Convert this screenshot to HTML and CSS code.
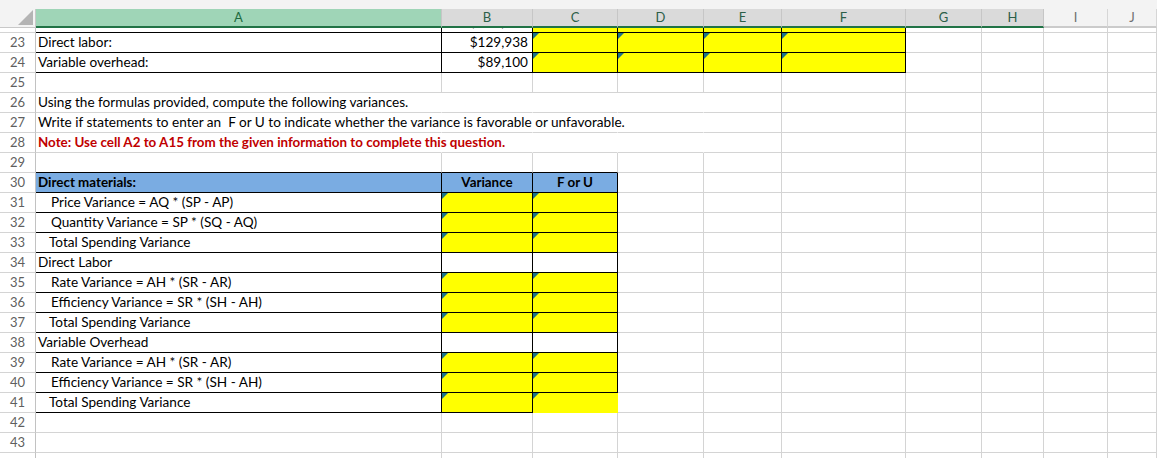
FILE: index.html
```html
<!DOCTYPE html>
<html>
<head>
<meta charset="utf-8">
<link rel="stylesheet" href="styles.css">
</head>
<body>
<div class="sheet">
  <div class="colhead">
    <div class="corner"><svg width="35" height="18" viewBox="0 0 35 18"><polygon points="33,1 33,16 18,16" fill="#b4b4b4"/></svg></div>
    <div class="ch sel">A</div>
    <div class="ch">B</div>
    <div class="ch">C</div>
    <div class="ch">D</div>
    <div class="ch">E</div>
    <div class="ch">F</div>
    <div class="ch">G</div>
    <div class="ch">H</div>
    <div class="ch off">I</div>
    <div class="ch off">J</div>
  </div>
  <div class="viewport">
    <div class="grid">
      <div class="r"><div class="h"></div><div class="bb br"></div><div class="bb br num">$146,360</div><div class="y bb br"></div><div class="y bb br"></div><div class="y bb br"></div><div class="y bb br"></div><div></div><div></div><div></div><div></div></div>
      <div class="r"><div class="h">23</div><div class="bb br">Direct labor:</div><div class="bb br num">$129,938</div><div class="y t bb br"></div><div class="y t bb br"></div><div class="y t bb br"></div><div class="y t bb br"></div><div></div><div></div><div></div><div></div></div>
      <div class="r"><div class="h">24</div><div class="bb br">Variable overhead:</div><div class="bb br num">$89,100</div><div class="y t bb br"></div><div class="y t bb br"></div><div class="y t bb br"></div><div class="y t bb br"></div><div></div><div></div><div></div><div></div></div>
      <div class="r"><div class="h">25</div><div></div><div></div><div></div><div></div><div></div><div></div><div></div><div></div><div></div><div></div></div>
      <div class="r"><div class="h">26</div><div class="nr">Using the formulas provided, compute the following variances.</div><div class="nr"></div><div class="nr"></div><div class="nr"></div><div></div><div></div><div></div><div></div><div></div><div></div></div>
      <div class="r"><div class="h">27</div><div class="nr">Write if statements to enter an&nbsp; F or U to indicate whether the variance is favorable or unfavorable.</div><div class="nr"></div><div class="nr"></div><div class="nr"></div><div></div><div></div><div></div><div></div><div></div><div></div></div>
      <div class="r"><div class="h">28</div><div class="nr b red">Note: Use cell A2 to A15 from the given information to complete this question.</div><div class="nr"></div><div class="nr"></div><div class="nr"></div><div></div><div></div><div></div><div></div><div></div><div></div></div>
      <div class="r"><div class="h">29</div><div class="bb"></div><div class="bb"></div><div class="bb"></div><div></div><div></div><div></div><div></div><div></div><div></div><div></div></div>
      <div class="r"><div class="h">30</div><div class="bl b bb br">Direct materials:</div><div class="bl b bb br ctr">Variance</div><div class="bl b bb br ctr">F or U</div><div></div><div></div><div></div><div></div><div></div><div></div><div></div></div>
      <div class="r"><div class="h">31</div><div class="i1 bb br">Price Variance = AQ * (SP - AP)</div><div class="y t bb br"></div><div class="y t bb br"></div><div></div><div></div><div></div><div></div><div></div><div></div><div></div></div>
      <div class="r"><div class="h">32</div><div class="i1 bb br">Quantity Variance = SP * (SQ - AQ)</div><div class="y t bb br"></div><div class="y t bb br"></div><div></div><div></div><div></div><div></div><div></div><div></div><div></div></div>
      <div class="r"><div class="h">33</div><div class="i2 bb br">Total Spending Variance</div><div class="y t bb br"></div><div class="y t bb br"></div><div></div><div></div><div></div><div></div><div></div><div></div><div></div></div>
      <div class="r"><div class="h">34</div><div class="bb br">Direct Labor</div><div class="bb br"></div><div class="bb br"></div><div></div><div></div><div></div><div></div><div></div><div></div><div></div></div>
      <div class="r"><div class="h">35</div><div class="i1 bb br">Rate Variance = AH * (SR - AR)</div><div class="y t bb br"></div><div class="y t bb br"></div><div></div><div></div><div></div><div></div><div></div><div></div><div></div></div>
      <div class="r"><div class="h">36</div><div class="i1 bb br">Efficiency Variance = SR * (SH - AH)</div><div class="y t bb br"></div><div class="y t bb br"></div><div></div><div></div><div></div><div></div><div></div><div></div><div></div></div>
      <div class="r"><div class="h">37</div><div class="i2 bb br">Total Spending Variance</div><div class="y t bb br"></div><div class="y t bb br"></div><div></div><div></div><div></div><div></div><div></div><div></div><div></div></div>
      <div class="r"><div class="h">38</div><div class="bb br">Variable Overhead</div><div class="bb br"></div><div class="bb br"></div><div></div><div></div><div></div><div></div><div></div><div></div><div></div></div>
      <div class="r"><div class="h">39</div><div class="i1 bb br">Rate Variance = AH * (SR - AR)</div><div class="y t bb br"></div><div class="y t bb br"></div><div></div><div></div><div></div><div></div><div></div><div></div><div></div></div>
      <div class="r"><div class="h">40</div><div class="i1 bb br">Efficiency Variance = SR * (SH - AH)</div><div class="y t bb br"></div><div class="y t bb br"></div><div></div><div></div><div></div><div></div><div></div><div></div><div></div></div>
      <div class="r"><div class="h">41</div><div class="i2 bb br">Total Spending Variance</div><div class="y t bb br"></div><div class="y t yn"></div><div></div><div></div><div></div><div></div><div></div><div></div><div></div></div>
      <div class="r"><div class="h">42</div><div></div><div></div><div></div><div></div><div></div><div></div><div></div><div></div><div></div><div></div></div>
      <div class="r"><div class="h">43</div><div></div><div></div><div></div><div></div><div></div><div></div><div></div><div></div><div></div><div></div></div>
      <div class="r"><div class="h"></div><div></div><div></div><div></div><div></div><div></div><div></div><div></div><div></div><div></div><div></div></div>
    </div>
  </div>
</div>
</body>
</html>
```
FILE: styles.css
```css
:root {
  --cols: 36px 406px 91px 85px 86px 78px 124px 76px 62px 64px 49px;
}
* { box-sizing: border-box; }
html, body { margin: 0; background: #fff; }
body {
  font-family: Lato, "Liberation Sans", sans-serif;
  overflow: hidden;
}
.sheet {
  width: 1157px;
  height: 458px;
  overflow: hidden;
}
.colhead {
  display: grid;
  grid-template-columns: var(--cols);
  padding-top: 9px;
  background: #f3f3f3;
}
.corner {
  height: 19px;
  border-right: 1px solid #c8c8c8;
  border-bottom: 1px solid #c8c8c8;
}
.corner svg { display: block; }
.ch {
  height: 19px;
  background: #dadada;
  border-right: 1px solid #c6c6c6;
  border-bottom: 2px solid #217346;
  text-align: center;
  font-size: 13px;
  line-height: 17px;
  color: #2c5e48;
}
.ch.sel { background: #9fd5b7; color: #1d6b40; }
.ch.off {
  background: #f3f3f3;
  color: #707070;
  border-right-color: #d6d6d6;
  border-bottom-color: #cbcbcb;
}
.viewport {
  height: 430px;
  overflow: hidden;
}
.grid { margin-top: -15px; }
.r {
  display: grid;
  grid-template-columns: var(--cols);
  height: 20px;
}
.r > div {
  height: 20px;
  min-width: 0;
  position: relative;
  border-right: 1px solid #d4d4d4;
  border-bottom: 1px solid #d4d4d4;
  padding: 0 2px;
  font-size: 13.6px;
  line-height: 19px;
  white-space: nowrap;
  color: #000;
}
.r > .h {
  padding: 0;
  text-align: center;
  font-size: 13px;
  color: #5f5f5f;
  border-right-color: #c2c2c2;
}
.r > .bb { border-bottom-color: #000; }
.r > .br { border-right-color: #000; }
.r > .nr { border-right-color: transparent; }
.r > .y { background: #ffff00; }
.r > .yn { border-right-color: #ffff00; border-bottom-color: #ffff00; }
.r > .bl { background: #7aace2; }
.r > .num { text-align: right; padding-right: 4px; }
.r > .ctr { text-align: center; }
.r > .b { font-weight: 700; font-size: 13.4px; }
.r > .red { color: #c00000; }
.r > .i1 { padding-left: 15px; }
.r > .i2 { padding-left: 13px; }
.t::before {
  content: "";
  position: absolute;
  left: 0;
  top: 0;
  border-top: 6px solid #1d7388;
  border-right: 6px solid transparent;
}
```
